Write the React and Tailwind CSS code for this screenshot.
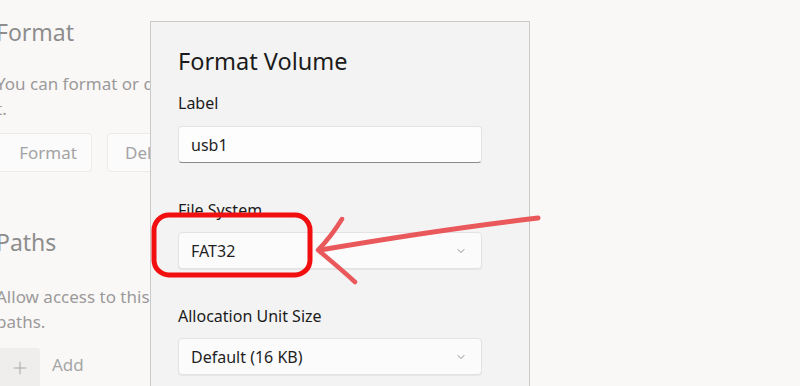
import { ChevronDown, Plus } from 'lucide-react'

const font = { fontFamily: '"Noto Sans", "Open Sans", sans-serif' }

const Field = ({ label, children }) => (
  <div className="flex flex-col">
    <p className="text-[16px] leading-[22px] text-[#1b1b1b]">{label}</p>
    {children}
  </div>
)

const SelectBox = ({ value }) => (
  <div className="mt-[11px] flex h-[37px] w-[304px] items-center justify-between rounded-[4px] border border-[#e3e3e3] bg-[#fbfbfb] pl-[12px] pr-[14px] shadow-[0_1px_1px_rgba(0,0,0,0.06)]">
    <span className="text-[16px] text-[#1f1f1f]">{value}</span>
    <ChevronDown size={12} strokeWidth={1.5} className="text-[#6b6b6b]" />
  </div>
)

export default function App() {
  return (
    <div
      className="relative flex h-[386px] w-[800px] overflow-hidden bg-[#faf8f7]"
      style={font}
    >
      {/* dimmed page behind the dialog, clipped at the dialog's edge */}
      <div className="ml-[-4px] flex w-[154px] shrink-0 flex-col overflow-hidden pt-[16px] text-[#9a9a9a]">
        <h2 className="text-[23px] leading-[32px] text-[#8d8d8d]">Format</h2>
        <p className="mt-[23px] whitespace-nowrap text-[17px] leading-[25px]">
          You can format or delete this volume.
          <br />
          t.
        </p>
        <div className="mt-[12px] flex gap-[15px]">
          <div className="flex h-[39px] w-[96px] shrink-0 items-center justify-center rounded-[4px] border border-[#ecebea] bg-[#fcfbfb] pl-[8px] text-[17px] text-[#a3a3a3]">
            Format
          </div>
          <div className="flex h-[39px] w-[90px] shrink-0 items-center rounded-[4px] border border-[#ecebea] bg-[#fcfbfb] pl-[17px] text-[17px] text-[#a3a3a3]">
            Delete
          </div>
        </div>
        <h2 className="mt-[54px] text-[23px] leading-[32px] text-[#8d8d8d]">Paths</h2>
        <p className="mt-[26px] whitespace-nowrap text-[17px] leading-[25px]">
          Allow access to this volume using the following
          <br />
          paths.
        </p>
        <div className="mt-[14px] flex items-center gap-[12px]">
          <div className="flex h-[40px] w-[44px] shrink-0 items-center justify-center rounded-[3px] bg-[#efeeed] pl-[4px]">
            <Plus size={20} strokeWidth={1.2} className="text-[#a6a6a6]" />
          </div>
          <span className="-mt-[6px] text-[17px] text-[#a6a6a6]">Add</span>
        </div>
      </div>

      {/* dialog */}
      <div className="absolute left-[150px] top-[21px] h-[380px] w-[380px] border border-[#c9c9c9] bg-[#f3f3f3] pl-[27px] pt-[22px]">
        <h1 className="text-[23.5px] leading-[34px] text-[#1b1b1b]">Format Volume</h1>
        <div className="mt-[14px] flex flex-col gap-[36px]">
          <Field label="Label">
            <div className="mt-[12px] flex h-[37px] w-[304px] items-center rounded-[4px] border border-[#e3e3e3] border-b-[#8a8a8a] bg-[#fdfdfd] pl-[12px]">
              <span className="text-[16px] text-[#1f1f1f]">usb1</span>
            </div>
          </Field>
          <Field label="File System">
            <SelectBox value="FAT32" />
          </Field>
          <Field label="Allocation Unit Size">
            <SelectBox value="Default (16 KB)" />
          </Field>
        </div>
      </div>

      {/* annotation */}
      <svg
        className="pointer-events-none absolute left-0 top-0"
        width="800"
        height="386"
        viewBox="0 0 800 386"
      >
        <rect
          x="154"
          y="215"
          width="156"
          height="60"
          rx="15"
          fill="none"
          stroke="#f20f0f"
          strokeWidth="5"
        />
        <path
          d="M538 218 C 470 226, 390 238, 320 250"
          fill="none"
          stroke="#e9585b"
          strokeWidth="5"
          strokeLinecap="round"
        />
        <path
          d="M342 219 C 334 232, 326 242, 318 250 C 330 260, 342 270, 355 282"
          fill="none"
          stroke="#e9585b"
          strokeWidth="4.5"
          strokeLinecap="round"
          strokeLinejoin="round"
        />
      </svg>
    </div>
  )
}
